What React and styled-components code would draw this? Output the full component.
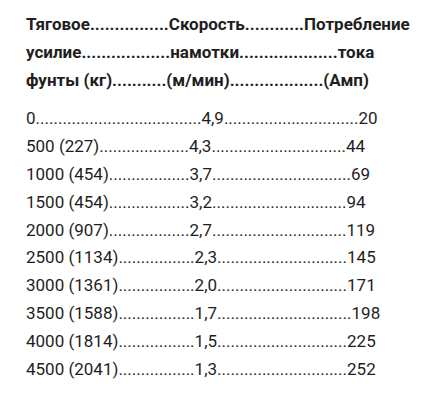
import React from 'react';
import styled, { createGlobalStyle } from 'styled-components';

const GlobalStyle = createGlobalStyle`
  html, body {
    margin: 0;
    padding: 0;
    background: #ffffff;
  }
  body {
    font-family: Roboto, 'Liberation Sans', sans-serif;
    color: #1e1e1e;
  }
`;

const Sheet = styled.div`
  width: 436px;
  height: 420px;
  padding: 11px 0 0 26px;
  box-sizing: border-box;
  overflow: hidden;
`;

const Table = styled.div`
  font-size: 17px;
  white-space: nowrap;
`;

const Block = styled.div`
  display: flex;
  flex-direction: column;
  font-weight: ${({ $head }) => ($head ? 700 : 400)};
  margin-bottom: ${({ $head }) => ($head ? '11px' : '0')};
`;

const Line = styled.div`
  line-height: 27.8px;
`;

const dots = (n) => '.'.repeat(n);

const header = [
  ['Тяговое', 16, 'Скорость', 12, 'Потребление'],
  ['усилие', 18, 'намотки', 20, 'тока'],
  ['фунты (кг)', 11, '(м/мин)', 19, '(Амп)'],
];

const rows = [
  ['0', 37, '4,9', 30, '20'],
  ['500 (227)', 20, '4,3', 30, '44'],
  ['1000 (454)', 18, '3,7', 31, '69'],
  ['1500 (454)', 18, '3,2', 30, '94'],
  ['2000 (907)', 18, '2,7', 30, '119'],
  ['2500 (1134)', 17, '2,3', 29, '145'],
  ['3000 (1361)', 17, '2,0', 29, '171'],
  ['3500 (1588)', 17, '1,7', 30, '198'],
  ['4000 (1814)', 17, '1,5', 29, '225'],
  ['4500 (2041)', 17, '1,3', 29, '252'],
];

const renderLine = ([a, d1, b, d2, c]) => (
  <Line key={a}>
    {a}
    {dots(d1)}
    {b}
    {dots(d2)}
    {c}
  </Line>
);

const App = () => (
  <>
    <GlobalStyle />
    <Sheet>
      <Table>
        <Block $head>{header.map(renderLine)}</Block>
        <Block>{rows.map(renderLine)}</Block>
      </Table>
    </Sheet>
  </>
);

export default App;
